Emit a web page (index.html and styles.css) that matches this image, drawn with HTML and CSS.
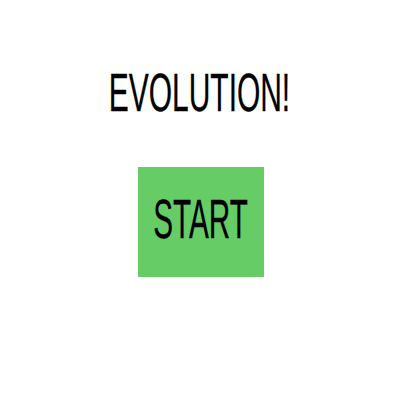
FILE: index.html
```html
<!DOCTYPE html>
<html>
<head>
<meta charset="utf-8">
<link rel="stylesheet" href="styles.css">
</head>
<body>
<main class="screen">
  <h1 class="title">EVOLUTION!</h1>
  <button class="start"><span class="start-label">START</span></button>
</main>
</body>
</html>
```

FILE: styles.css
```css
html, body {
  margin: 0;
  padding: 0;
  background: #ffffff;
}
.screen {
  width: 400px;
  height: 400px;
  display: flex;
  flex-direction: column;
  align-items: center;
  padding-top: 66px;
  box-sizing: border-box;
  font-family: "Liberation Sans", Arial, sans-serif;
}
.title {
  margin: 0;
  font-size: 53px;
  line-height: 53px;
  font-weight: normal;
  color: #000;
  transform: scaleX(0.565);
  white-space: nowrap;
  -webkit-text-stroke: 0.3px #000;
}
.start {
  margin-top: 48px;
  margin-left: 1px;
  width: 126px;
  height: 110px;
  border: none;
  padding: 0 0 6px 0;
  background: #66cc66;
  color: #000;
  font-family: "Liberation Sans", Arial, sans-serif;
  font-size: 55px;
  line-height: 55px;
  display: flex;
  align-items: center;
  justify-content: center;
  overflow: visible;
}
.start-label {
  display: inline-block;
  white-space: nowrap;
  transform: scaleX(0.54);
  -webkit-text-stroke: 0.3px #000;
}
```
